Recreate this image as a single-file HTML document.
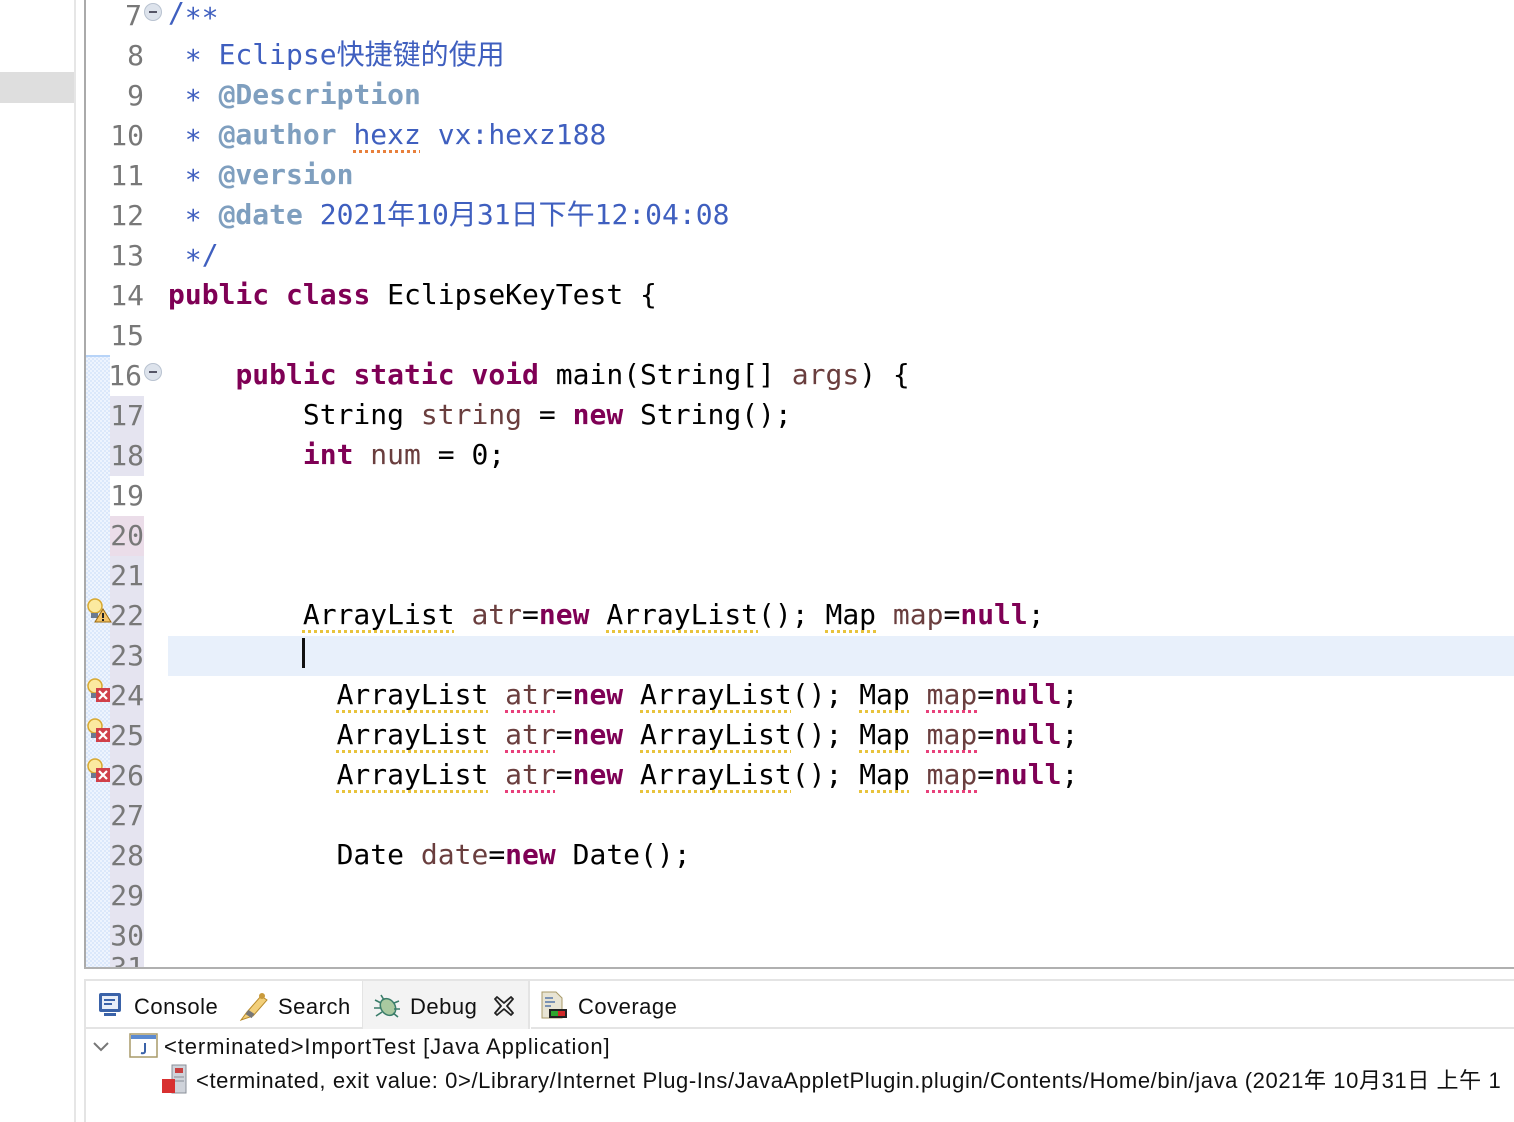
<!DOCTYPE html>
<html><head><meta charset="utf-8"><style>
*{margin:0;padding:0;box-sizing:border-box}
body{width:1514px;height:1122px;overflow:hidden;background:#fff;position:relative;font-family:"Liberation Sans","Noto Sans CJK SC",sans-serif}
.a{position:absolute}
.ln{position:absolute;left:108px;width:36px;height:40px;text-align:right;font:28px/40px "DejaVu Sans Mono","Noto Sans CJK SC",monospace;color:#787878;margin-top:0px}
.c{position:absolute;left:168px;height:40px;white-space:pre;font:28px/40px "DejaVu Sans Mono","Noto Sans CJK SC",monospace;color:#000;margin-top:-1px}
.cm{color:#3f5fbf}.tg{color:#7f9fbf;font-weight:bold}
.k{color:#7f0055;font-weight:bold}.v{color:#6a3e3e}
.w{text-decoration:underline dotted #e8c33c 3px;text-underline-offset:6px}
.e{text-decoration:underline dotted #e8407a 3px;text-underline-offset:6px}
.o{text-decoration:underline dotted #e8803c 3px;text-underline-offset:6px}
.fold{position:absolute;left:144px;width:18px;height:18px;border-radius:50%;background:#dde3ec;border:1px solid #b8c2d0}
.fold:after{content:"";position:absolute;left:4px;top:7px;width:8px;height:2px;background:#556}
.tab{position:absolute;top:983px;height:47px;font-size:22px;line-height:47px;color:#111;letter-spacing:0.5px}
</style></head><body>
<div class="a" style="left:0;top:72px;width:74px;height:31px;background:#dedede"></div>
<div class="a" style="left:74px;top:0;width:2px;height:1122px;background:#e6e6e6"></div>
<div class="a" style="left:84px;top:0;width:2px;height:969px;background:#aaa"></div>
<div class="a" style="left:86px;top:356px;width:24px;height:612px;background-color:#dbe8fb;background-image:linear-gradient(45deg,#eef4fe 25%,transparent 25%,transparent 75%,#eef4fe 75%),linear-gradient(45deg,#eef4fe 25%,transparent 25%,transparent 75%,#eef4fe 75%);background-size:4px 4px;background-position:0 0,2px 2px"></div>
<div class="a" style="left:86px;top:355px;width:24px;height:2px;background:#b8d4f8"></div>
<div class="a" style="left:110px;top:396px;width:34px;height:80px;background:#e5e4f0"></div>
<div class="a" style="left:110px;top:516px;width:34px;height:40px;background:#ebdde9"></div>
<div class="a" style="left:110px;top:556px;width:34px;height:412px;background:#e5e4f0"></div>
<div class="a" style="left:168px;top:636px;width:1346px;height:40px;background:#e8f0fb"></div>
<div class="a" style="left:84px;top:967px;width:1430px;height:2px;background:#b0b0b0"></div>

<div class="ln" style="top:-4px;width:34px">7</div><div class="fold" style="top:3px"></div>
<div class="ln" style="top:36px">8</div><div class="ln" style="top:76px">9</div><div class="ln" style="top:116px">10</div>
<div class="ln" style="top:156px">11</div><div class="ln" style="top:196px">12</div><div class="ln" style="top:236px">13</div>
<div class="ln" style="top:276px">14</div><div class="ln" style="top:316px">15</div>
<div class="ln" style="top:356px;width:34px">16</div><div class="fold" style="top:363px"></div>
<div class="ln" style="top:396px">17</div><div class="ln" style="top:436px">18</div><div class="ln" style="top:476px">19</div>
<div class="ln" style="top:516px">20</div><div class="ln" style="top:556px">21</div><div class="ln" style="top:596px">22</div>
<div class="ln" style="top:636px">23</div><div class="ln" style="top:676px">24</div><div class="ln" style="top:716px">25</div>
<div class="ln" style="top:756px">26</div><div class="ln" style="top:796px">27</div><div class="ln" style="top:836px">28</div>
<div class="ln" style="top:876px">29</div><div class="ln" style="top:916px">30</div>
<div class="ln" style="top:948px;height:19px;overflow:hidden">31</div>

<svg class="a" style="left:86px;top:598px" width="26" height="26"><circle cx="9" cy="8" r="7" fill="#fbeaa0" stroke="#d8a830" stroke-width="1.5"/><rect x="5" y="15" width="7" height="5" fill="#6b7a90"/><path d="M17 11 L25 24 L9 24 Z" fill="#f3c46a" stroke="#9a6a10"/><rect x="16" y="15" width="2" height="5" fill="#222"/><rect x="16" y="21" width="2" height="2" fill="#222"/></svg>
<svg class="a" style="left:86px;top:678px" width="26" height="26"><circle cx="9" cy="8" r="7" fill="#fbeaa0" stroke="#d8a830" stroke-width="1.5"/><rect x="5" y="15" width="7" height="5" fill="#6b7a90"/><rect x="10" y="10" width="14" height="14" fill="#d0404a"/><path d="M13 13l8 8M21 13l-8 8" stroke="#fff" stroke-width="2.2"/></svg>
<svg class="a" style="left:86px;top:718px" width="26" height="26"><circle cx="9" cy="8" r="7" fill="#fbeaa0" stroke="#d8a830" stroke-width="1.5"/><rect x="5" y="15" width="7" height="5" fill="#6b7a90"/><rect x="10" y="10" width="14" height="14" fill="#d0404a"/><path d="M13 13l8 8M21 13l-8 8" stroke="#fff" stroke-width="2.2"/></svg>
<svg class="a" style="left:86px;top:758px" width="26" height="26"><circle cx="9" cy="8" r="7" fill="#fbeaa0" stroke="#d8a830" stroke-width="1.5"/><rect x="5" y="15" width="7" height="5" fill="#6b7a90"/><rect x="10" y="10" width="14" height="14" fill="#d0404a"/><path d="M13 13l8 8M21 13l-8 8" stroke="#fff" stroke-width="2.2"/></svg>

<div class="c cm" style="top:-6px">/∗∗</div>
<div class="c cm" style="top:36px"> ∗ Eclipse快捷键的使用</div>
<div class="c cm" style="top:76px"> ∗ <span class="tg">@Description</span></div>
<div class="c cm" style="top:116px"> ∗ <span class="tg">@author</span> <span class="o">hexz</span> vx:hexz188</div>
<div class="c cm" style="top:156px"> ∗ <span class="tg">@version</span></div>
<div class="c cm" style="top:196px"> ∗ <span class="tg">@date</span> 2021年10月31日下午12:04:08</div>
<div class="c cm" style="top:236px"> ∗/</div>
<div class="c" style="top:276px"><span class="k">public</span> <span class="k">class</span> EclipseKeyTest {</div>
<div class="c" style="top:356px">    <span class="k">public</span> <span class="k">static</span> <span class="k">void</span> main(String[] <span class="v">args</span>) {</div>
<div class="c" style="top:396px">        String <span class="v">string</span> = <span class="k">new</span> String();</div>
<div class="c" style="top:436px">        <span class="k">int</span> <span class="v">num</span> = 0;</div>
<div class="c" style="top:596px">        <span class="w">ArrayList</span> <span class="v">atr</span>=<span class="k">new</span> <span class="w">ArrayList</span>(); <span class="w">Map</span> <span class="v">map</span>=<span class="k">null</span>;</div>
<div class="a" style="left:302px;top:638px;width:3px;height:30px;background:#111"></div>
<div class="c" style="top:676px">          <span class="w">ArrayList</span> <span class="v e">atr</span>=<span class="k">new</span> <span class="w">ArrayList</span>(); <span class="w">Map</span> <span class="v e">map</span>=<span class="k">null</span>;</div>
<div class="c" style="top:716px">          <span class="w">ArrayList</span> <span class="v e">atr</span>=<span class="k">new</span> <span class="w">ArrayList</span>(); <span class="w">Map</span> <span class="v e">map</span>=<span class="k">null</span>;</div>
<div class="c" style="top:756px">          <span class="w">ArrayList</span> <span class="v e">atr</span>=<span class="k">new</span> <span class="w">ArrayList</span>(); <span class="w">Map</span> <span class="v e">map</span>=<span class="k">null</span>;</div>
<div class="c" style="top:836px">          Date <span class="v">date</span>=<span class="k">new</span> Date();</div>

<div class="a" style="left:84px;top:979px;width:1430px;height:2px;background:#e4e4e4"></div>
<div class="a" style="left:84px;top:979px;width:2px;height:143px;background:#e4e4e4"></div>
<div class="a" style="left:362px;top:981px;width:168px;height:48px;background:#f3f3f3;border-left:1px solid #e4e4e4;border-right:2px solid #e4e4e4"></div>
<div class="a" style="left:86px;top:1027px;width:276px;height:2px;background:#e4e4e4"></div>
<div class="a" style="left:531px;top:1027px;width:983px;height:2px;background:#e4e4e4"></div>

<svg class="a" style="left:97px;top:991px" width="28" height="28"><rect x="2" y="2" width="22" height="19" rx="2" fill="#3a62a8"/><rect x="5" y="5" width="16" height="13" fill="#e8eef8"/><path d="M7 9h11M7 13h8" stroke="#3a62a8" stroke-width="2"/><rect x="7" y="22" width="12" height="3" fill="#3a62a8"/></svg>
<div class="tab" style="left:134px">Console</div>
<svg class="a" style="left:237px;top:990px" width="34" height="34"><path d="M4 30 L10 22 L24 6 L30 10 L16 26 Z" fill="#f2cf7a" stroke="#b88a2a"/><path d="M10 22 L16 26" stroke="#777" stroke-width="5"/><circle cx="25" cy="6" r="3" fill="#c99a3c"/></svg>
<div class="tab" style="left:278px">Search</div>
<svg class="a" style="left:372px;top:992px" width="30" height="30"><ellipse cx="16" cy="15" rx="7" ry="9" transform="rotate(-35 16 15)" fill="#a9c9a0" stroke="#3a7d6a" stroke-width="1.5"/><path d="M3 8l6 3M2 16h7M4 24l6-4M27 9l-5 2M28 17h-6M26 25l-5-4M9 3l3 5" stroke="#3a7d6a" stroke-width="1.6"/></svg>
<div class="tab" style="left:410px">Debug</div>
<svg class="a" style="left:493px;top:995px" width="22" height="22"><path d="M4 2 L11 8 L18 2 L20 4 L14 11 L20 18 L18 20 L11 14 L4 20 L2 18 L8 11 L2 4 Z" fill="none" stroke="#222" stroke-width="1.8" stroke-linejoin="round"/></svg>
<svg class="a" style="left:539px;top:990px" width="30" height="32"><path d="M3 2h14l6 6v20H3z" fill="#e8e4d4" stroke="#a89a68"/><path d="M6 8h8M6 12h10M6 16h6" stroke="#5577aa" stroke-width="1.5"/><rect x="10" y="19" width="18" height="9" fill="#222"/><rect x="12" y="21" width="7" height="5" fill="#2ea82e"/><rect x="19" y="21" width="7" height="5" fill="#d02828"/></svg>
<div class="tab" style="left:578px">Coverage</div>

<svg class="a" style="left:92px;top:1040px" width="18" height="14"><path d="M2 3 L9 10 L16 3" fill="none" stroke="#777" stroke-width="2"/></svg>
<svg class="a" style="left:129px;top:1033px" width="30" height="26"><rect x="1" y="1" width="27" height="23" fill="#fff" stroke="#a89a68" stroke-width="1.5"/><rect x="2" y="2" width="25" height="4" fill="#5b8ad0"/><path d="M16 10v8q0 3-4 2" fill="none" stroke="#3a62a8" stroke-width="2"/></svg>
<div class="a" style="left:164px;top:1032px;font-size:22px;line-height:30px;color:#111;letter-spacing:0.9px;white-space:nowrap">&lt;terminated&gt;ImportTest [Java Application]</div>
<svg class="a" style="left:160px;top:1063px" width="30" height="32"><rect x="12" y="2" width="14" height="28" fill="#cfd3da" stroke="#8a8f98"/><rect x="15" y="5" width="8" height="5" fill="#c84040"/><path d="M14 14h10M14 18h10" stroke="#8a8f98"/><rect x="2" y="16" width="13" height="14" fill="#d83030"/></svg>
<div class="a" style="left:196px;top:1066px;font-size:22px;line-height:30px;color:#111;white-space:nowrap;letter-spacing:0.6px">&lt;terminated, exit value: 0&gt;/Library/Internet Plug-Ins/JavaAppletPlugin.plugin/Contents/Home/bin/java (2021年 10月31日 上午 1</div>
</body></html>
